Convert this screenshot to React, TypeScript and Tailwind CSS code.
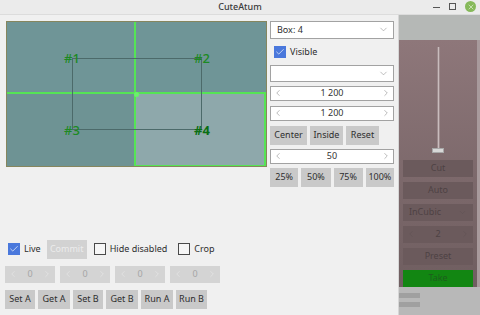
import { ChevronDown, ChevronLeft, ChevronRight, Check, X } from "lucide-react";

const font = { fontFamily: '"Noto Sans", "Open Sans", sans-serif' };

function Btn({ label, w, disabled }: { label: string; w: number; disabled?: boolean }) {
  return (
    <div
      className={`h-[19px] flex items-center justify-center text-[9px] ${
        disabled ? "bg-[#d2d2d2] text-[#ececec]" : "bg-[#c9c9c9] text-[#2e2e2e]"
      }`}
      style={{ width: w }}
    >
      {label}
    </div>
  );
}

function Spin({ value, h = 15, disabled }: { value: string; h?: number; disabled?: boolean }) {
  return (
    <div
      className={`flex items-center justify-between px-[2px] border ${
        disabled ? "bg-[#d4d4d4] border-[#d4d4d4] text-[#a6a6a6]" : "bg-white border-[#a2a2a2] text-[#333]"
      }`}
      style={{ height: h }}
    >
      <ChevronLeft size={10} strokeWidth={1.2} className={disabled ? "text-[#ececec]" : "text-[#777]"} />
      <span className="text-[9px]">{value}</span>
      <ChevronRight size={10} strokeWidth={1.2} className={disabled ? "text-[#ececec]" : "text-[#777]"} />
    </div>
  );
}

function Box({ checked, label }: { checked?: boolean; label: string }) {
  return (
    <div className="flex items-center gap-[4px] text-[9px] text-[#2e2e2e]">
      {checked ? (
        <div className="w-[12px] h-[12px] bg-[#4a78dc] flex items-center justify-center">
          <Check size={10} strokeWidth={1.6} className="text-white" />
        </div>
      ) : (
        <div className="w-[12px] h-[12px] border border-[#4a4a4a] bg-[#f6f6f6]" />
      )}
      <span>{label}</span>
    </div>
  );
}

function Preview() {
  return (
    <div className="relative w-[261px] h-[146px] border border-[#86865e] bg-[#6f9496]">
      <div className="grid grid-cols-[129px_1fr] grid-rows-[72px_1fr] w-full h-full">
        <div className="bg-[#6f9597] border-r-2 border-b-2 border-[#55e455]" />
        <div className="bg-[#6f9597] border-b-2 border-[#55e455]" />
        <div className="bg-[#6e9394] border-r-2 border-[#55e455]" />
        <div className="bg-[#8ea8ab] border-r-2 border-b border-[#55e455]" />
      </div>
      <div className="absolute left-[65px] top-[36px] w-[130px] h-[72px] border border-[#4c6a6a]" />
      <div className="absolute left-[127px] top-[70px] w-[5px] h-[5px] rounded-full bg-[#6bf06b]" />
      {[
        { t: "#1", x: 65, y: 36 },
        { t: "#2", x: 195, y: 36 },
        { t: "#3", x: 65, y: 108 },
        { t: "#4", x: 195, y: 108, b: true },
      ].map((l) => (
        <span
          key={l.t}
          className={`absolute -translate-x-1/2 -translate-y-1/2 text-[13px] leading-none ${
            l.b ? "font-bold text-[#0a6f12]" : "font-medium text-[#1c8a22]"
          }`}
          style={{ left: l.x, top: l.y }}
        >
          {l.t}
        </span>
      ))}
    </div>
  );
}

function Combo({ label, h = 18 }: { label: string; h?: number }) {
  return (
    <div
      className="bg-white border border-[#a2a2a2] flex items-center justify-between pl-[6px] pr-[4px] text-[9px] text-[#2e2e2e]"
      style={{ height: h }}
    >
      <span>{label}</span>
      <ChevronDown size={11} strokeWidth={1.2} className="text-[#888]" />
    </div>
  );
}

function DarkBox({ label, green }: { label: string; green?: boolean }) {
  return (
    <div
      className={`h-[17px] flex items-center justify-center text-[9px] ${
        green ? "bg-[#128612] text-[#1c5e1c]" : "bg-[#6b5a5c] text-[#4e4244]"
      }`}
    >
      {label}
    </div>
  );
}

export default function App() {
  return (
    <div className="w-[480px] h-[315px] bg-[#f0f0f0] flex flex-col overflow-hidden" style={font}>
      <div className="h-[17px] bg-[#ebebeb] border-b border-[#dcdcdc] relative flex items-center justify-center">
        <span className="text-[9px] font-medium text-[#3a3a3a]">CuteAtum</span>
        <div className="absolute right-[4px] top-0 h-full flex items-center gap-[9px]">
          <div className="w-[7px] h-[1px] bg-[#555] mt-[2px]" />
          <div className="w-[7px] h-[7px] border border-[#555]" />
          <div className="w-[11px] h-[11px] rounded-full bg-[#86b95a] flex items-center justify-center">
            <X size={8} strokeWidth={2} className="text-[#e8f3dd]" />
          </div>
        </div>
      </div>

      <div className="flex flex-1">
        <div className="w-[398px] flex flex-col justify-between pb-[8px]">
          <div className="flex gap-[3px] pl-[6px] pt-[6px]">
            <Preview />
            <div className="w-[124px] flex flex-col">
              <Combo label="Box: 4" />
              <div className="h-[26px] flex items-center pl-[4px]">
                <Box checked label="Visible" />
              </div>
              <Combo label="" h={17} />
              <div className="mt-[4px] flex flex-col gap-[5px]">
                <Spin value="1 200" />
                <Spin value="1 200" />
              </div>
              <div className="flex gap-[3px] mt-[5px]">
                <Btn label="Center" w={37} />
                <Btn label="Inside" w={33} />
                <Btn label="Reset" w={33} />
              </div>
              <div className="mt-[4px]">
                <Spin value="50" />
              </div>
              <div className="flex gap-[3px] mt-[4px]">
                <Btn label="25%" w={31} />
                <Btn label="50%" w={32} />
                <Btn label="75%" w={32} />
                <Btn label="100%" w={31} />
              </div>
            </div>
          </div>

          <div className="flex flex-col gap-[7px] pl-[5px]">
            <div className="flex items-center pl-[3px]">
              <Box checked label="Live" />
              <div className="ml-[6px] w-[40px] h-[19px] bg-[#d2d2d2] text-[#ececec] text-[9px] flex items-center justify-center">
                Commit
              </div>
              <div className="ml-[7px]">
                <Box label="Hide disabled" />
              </div>
              <div className="ml-[11px]">
                <Box label="Crop" />
              </div>
            </div>
            <div className="flex gap-[5px]">
              {[0, 1, 2, 3].map((i) => (
                <div key={i} className="w-[50px]">
                  <Spin value="0" h={17} disabled />
                </div>
              ))}
            </div>
            <div className="flex gap-[3px]">
              <Btn label="Set A" w={30} />
              <Btn label="Get A" w={32} />
              <Btn label="Set B" w={30} />
              <Btn label="Get B" w={32} />
              <Btn label="Run A" w={32} />
              <Btn label="Run B" w={31} />
            </div>
          </div>
        </div>

        <div className="flex-1 border-l border-[#d6d6d6] flex flex-col">
          <div className="h-[25px] bg-[#b5b8b6]" />
          <div className="flex-1 bg-gradient-to-b from-[#8e777a] to-[#6f5e60] border-r-[3px] border-[#a89a9c] flex flex-col">
            <div className="flex justify-center pt-[7px]">
              <div className="relative w-[12px] h-[106px] flex justify-center">
                <div className="w-[3px] h-[102px] bg-[#c9bcbd] border-x border-[#9c8a8c]" />
                <div className="absolute bottom-0 w-[12px] h-[5px] bg-[#d8d8d8] border border-[#a8a8a8]" />
              </div>
            </div>
            <div className="flex flex-col gap-[5px] px-[4px] mt-[7px]">
              <DarkBox label="Cut" />
              <DarkBox label="Auto" />
              <div className="h-[17px] bg-[#6b5a5c] text-[#4e4244] text-[9px] flex items-center justify-between px-[6px]">
                <span>InCubic</span>
                <ChevronDown size={9} strokeWidth={1.2} className="text-[#5e5052]" />
              </div>
              <div className="h-[17px] bg-[#6b5a5c] text-[#4e4244] text-[9px] flex items-center justify-between px-[3px]">
                <ChevronLeft size={10} strokeWidth={1.2} className="text-[#5e5052]" />
                <span>2</span>
                <ChevronRight size={10} strokeWidth={1.2} className="text-[#5e5052]" />
              </div>
              <DarkBox label="Preset" />
              <DarkBox label="Take" green />
            </div>
          </div>
          <div className="h-[30px] bg-[#b8b8b8] flex flex-col gap-[4px] pt-[6px]">
            <div className="w-[21px] h-[5px] bg-[#a0a0a0]" />
            <div className="w-[21px] h-[5px] bg-[#a0a0a0]" />
          </div>
        </div>
      </div>
    </div>
  );
}
